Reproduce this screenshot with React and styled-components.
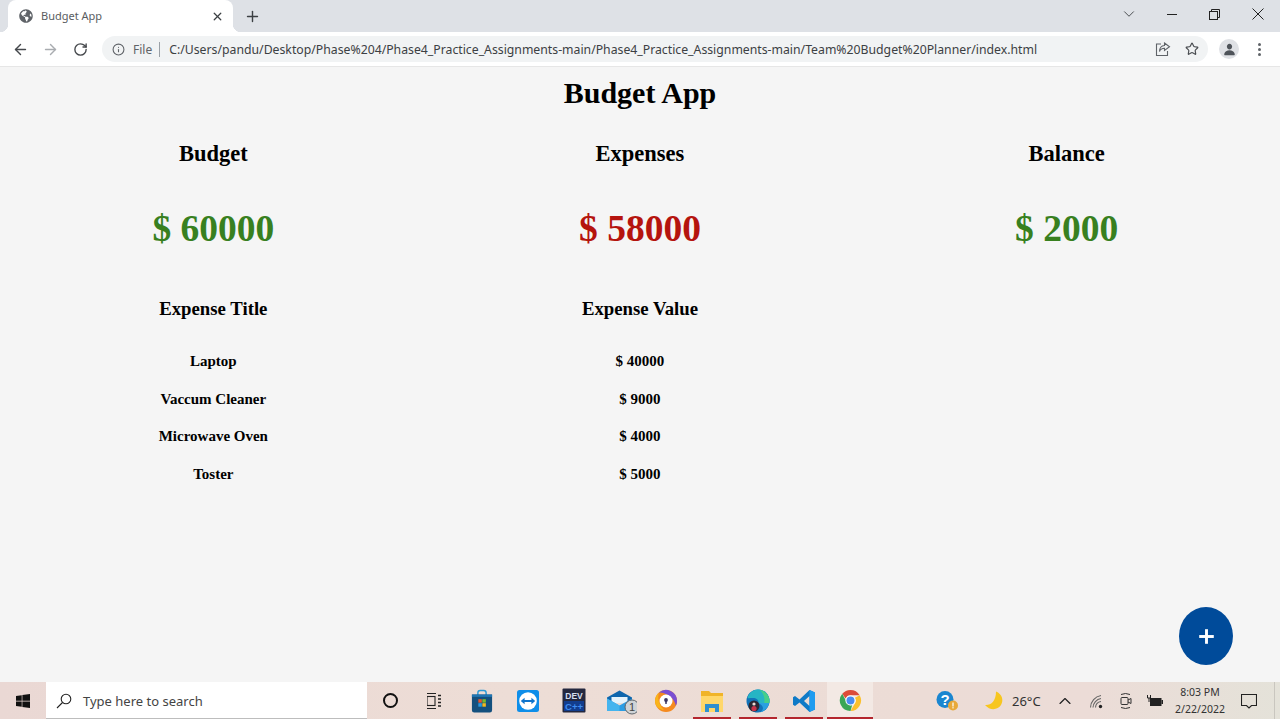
import React from 'react'
import styled, { createGlobalStyle } from 'styled-components'
import { X, Plus, ArrowLeft, ArrowRight, RotateCw, Info, Star, ChevronDown, ChevronUp } from 'lucide-react'
import { FaGlobeAmericas, FaWindows } from 'react-icons/fa'
import { IoPerson } from 'react-icons/io5'

const GlobalStyle = createGlobalStyle`
  html, body { margin: 0; padding: 0; height: 100%; }
  body { font-family: "Liberation Serif", serif; background: #f5f5f5; overflow: hidden; }
  #root { height: 100%; }
`

const budgetCards = [
  { title: 'Budget', value: '$ 60000', color: '#38801f' },
  { title: 'Expenses', value: '$ 58000', color: '#b5140e' },
  { title: 'Balance', value: '$ 2000', color: '#38801f' },
]

const expenses = [
  { title: 'Laptop', value: '$ 40000' },
  { title: 'Vaccum Cleaner', value: '$ 9000' },
  { title: 'Microwave Oven', value: '$ 4000' },
  { title: 'Toster', value: '$ 5000' },
]

const StoreIcon = () => (
  <svg width="22" height="24" viewBox="0 0 24 26">
    <path d="M7.500 7V4a2.500 2.500 0 0 1 2.500-2.500h4A2.500 2.500 0 0 1 16.500 4v3" fill="none" stroke="#2c9bd6" strokeWidth="1.600" />
    <path d="M1 6h22v17a2.500 2.500 0 0 1-2.500 2.500h-17A2.500 2.500 0 0 1 1 23z" fill="#14507e" />
    <path d="M1 6h22v2.500H1z" fill="#1f76b4" />
    <rect x="8" y="11" width="3.800" height="3.800" fill="#e8552c" />
    <rect x="12.400" y="11" width="3.800" height="3.800" fill="#7ab92c" />
    <rect x="8" y="15.400" width="3.800" height="3.800" fill="#2a9ae0" />
    <rect x="12.400" y="15.400" width="3.800" height="3.800" fill="#f6b81d" />
  </svg>
)

const TeamViewerIcon = () => (
  <svg width="24" height="24" viewBox="0 0 24 24">
    <rect x="1" y="1" width="22" height="22" rx="2.500" fill="#0e8ee9" />
    <circle cx="12" cy="12" r="8.800" fill="#fff" />
    <path d="M4.800 12l3.800-3.200v2.100h6.800V8.800l3.800 3.200-3.800 3.200v-2.100H8.600v2.100z" fill="#0e74cc" />
  </svg>
)

const DevIcon = () => (
  <svg width="24" height="25" viewBox="0 0 24 25">
    <rect x="0.500" y="0.500" width="23" height="24" rx="1" fill="#24283f" />
    <rect x="2" y="13" width="20" height="10" fill="#123d8e" />
    <text x="12" y="11" textAnchor="middle" fontSize="8.500" fontWeight="700" fontFamily="Liberation Sans, sans-serif" fill="#d5deee">DEV</text>
    <text x="12" y="22" textAnchor="middle" fontSize="9.500" fontWeight="700" fontFamily="Liberation Sans, sans-serif" fill="#3f8cf0">C++</text>
  </svg>
)

const MailIcon = () => (
  <svg width="34" height="28" viewBox="-3 0 34 28">
    <path d="M1 10.500L13.500 3.500 26 10.500v4H1z" fill="#0f66ad" />
    <path d="M5.500 10h16v6h-16z" fill="#e6f3fb" />
    <path d="M1 11.500l12.500 7 12.500-7V23a1 1 0 0 1-1 1H2a1 1 0 0 1-1-1z" fill="#2b9de4" />
    <path d="M1 11.500l12.500 7V24H2a1 1 0 0 1-1-1z" fill="#45b4ee" />
    <circle cx="26" cy="20" r="7" fill="#cfd3d6" stroke="#5f666c" strokeWidth="1" />
    <text x="26" y="24" textAnchor="middle" fontSize="11" fontFamily="Liberation Sans, sans-serif" fill="#444">1</text>
  </svg>
)

const BrowserBadge = () => (
  <svg width="24" height="24" viewBox="0 0 24 24">
    <circle cx="12" cy="12" r="11" fill="#f58a1f" />
    <path d="M5 3.500A11 11 0 0 1 23 12c0 2-.5 3.500-1.200 5C21 10 14 3.500 5 3.500z" fill="#7a4fd3" />
    <path d="M1 12c0-3 1.200-6 4-8.500C3.500 8 4 15 10 21 5 20.500 1 17 1 12z" fill="#f9b41b" />
    <circle cx="12" cy="12" r="6.500" fill="#fff" />
    <circle cx="12" cy="11" r="1.900" fill="#3b3560" />
    <rect x="11.200" y="11.500" width="1.600" height="3.400" fill="#3b3560" />
  </svg>
)

const FolderIcon = () => (
  <svg width="22" height="24" viewBox="0 0 22 24">
    <path d="M0 2h8l2 2h12v5H0z" fill="#f0b429" />
    <rect y="7" width="22" height="16" fill="#ffd76a" />
    <path d="M4 23v-8h14v8h-4v-4h-6v4z" fill="#2f8fd0" />
  </svg>
)

const EdgeIcon = () => (
  <svg width="24" height="24" viewBox="0 0 24 24">
    <circle cx="12" cy="12" r="11.500" fill="#1273b8" />
    <path d="M1.500 9C3 3.500 7.500.5 12 .5c6 0 11.500 4.500 11.500 11.500 0 1-.1 1.500-.3 2H12.500c.3-3-2-5-5.500-5-2.500 0-4.500.5-5.500 0z" fill="#26b5c4" />
    <path d="M14 1c5 1 9.500 5.500 9.500 11 0 1-.1 1.500-.3 2h-5c1-5-1-10-4.200-13z" fill="#46cf8a" />
    <path d="M12.500 14h10.700c-.8 4-4 8-8.700 9.200 2.800-2 3.200-5 1-7-1-1-2.200-1.300-3-2.200z" fill="#2aa0e0" />
    <circle cx="8" cy="17" r="5.500" fill="#2b2733" />
    <circle cx="8" cy="19.500" r="2.600" fill="#c8344a" />
    <circle cx="8" cy="15" r="1.600" fill="#e9d9d4" />
  </svg>
)

const VsCodeIcon = () => (
  <svg width="24" height="24" viewBox="0 0 24 24">
    <path d="M17.500 1L23 3.600v16.800L17.500 23 7.500 13.600 3 17l-2-1.200V8.200L3 7l4.500 3.400zM17.500 7l-5.500 5 5.500 5z" fill="#0f7ac7" fillRule="evenodd" />
    <path d="M17.500 1L23 3.600v16.800L17.500 23z" fill="#1f9cf0" />
  </svg>
)

const ChromeIcon = () => (
  <svg width="23" height="23" viewBox="0 0 24 24">
    <path d="M12 1a11 11 0 0 1 9.530 5.500H12a5.500 5.500 0 0 0-5.100 3.500L3.400 5A11 11 0 0 1 12 1z" fill="#dd4b39" />
    <path d="M21.530 6.500A11 11 0 0 1 12 23l4.700-8.200A5.500 5.500 0 0 0 16.700 9z" fill="#fbc02d" />
    <path d="M12 23A11 11 0 0 1 3.400 5l4.700 8.700a5.500 5.500 0 0 0 5.600 3.300z" fill="#3aa655" />
    <circle cx="12" cy="12" r="5.300" fill="#fff" />
    <circle cx="12" cy="12" r="4.200" fill="#4a8cf0" />
  </svg>
)

const HelpIcon = () => (
  <svg width="24" height="24" viewBox="0 0 24 24">
    <circle cx="10" cy="10.500" r="8.500" fill="#1a86d0" />
    <text x="10" y="16" textAnchor="middle" fontSize="15" fontWeight="700" fontFamily="Liberation Sans, sans-serif" fill="#fff">?</text>
    <circle cx="18" cy="16.500" r="5" fill="#e8a93a" />
    <rect x="17.400" y="13.500" width="1.200" height="4" fill="#fff" />
    <rect x="17.400" y="18.200" width="1.200" height="1.200" fill="#fff" />
  </svg>
)

const MoonIcon = () => (
  <svg width="20" height="20" viewBox="0 0 20 20">
    <path d="M12 .5C18 3 20 9 17 14 14 19 6 20 1 14 7 14.500 12 10 12 .5z" fill="#f7c61f" />
  </svg>
)

const WifiIcon = () => (
  <svg width="16" height="16" viewBox="0 0 16 16" fill="none" stroke="#666" strokeWidth="1.100">
    <path d="M1.500 14.500A12.500 12.500 0 0 1 12 2.500" />
    <path d="M4 14.500a9.500 9.500 0 0 1 8-9" />
    <path d="M6.500 14.500a6.500 6.500 0 0 1 5.500-6" />
    <circle cx="11.500" cy="13.500" r="1.700" fill="#222" stroke="none" />
  </svg>
)

const MeetIcon = () => (
  <svg width="14" height="18" viewBox="0 0 14 18" fill="none" stroke="#333" strokeWidth="1">
    <path d="M2 2.500q4.500-2 9 0M2 15.500q4.500 2 9 0" />
    <rect x="2" y="5.500" width="7" height="7" rx="1" />
    <path d="M9 8l3-1.500v5L9 10" />
  </svg>
)

const BatteryIcon = () => (
  <svg width="16" height="12" viewBox="0 0 16 12">
    <rect x="3" y="3" width="11.500" height="8" fill="#222" />
    <rect x="14.500" y="5" width="1.500" height="4" fill="#222" />
    <path d="M.5 0v3h3V0M2 3v4" stroke="#222" fill="none" />
  </svg>
)

const App = () => {
  return (
    <Screen>
      <GlobalStyle />
      <TabStrip>
        <Tab>
          <TabFavicon><FaGlobeAmericas size={14} /></TabFavicon>
          <TabTitle>Budget App</TabTitle>
          <TabClose><X size={13} strokeWidth={2.4} /></TabClose>
        </Tab>
        <NewTab><Plus size={17} strokeWidth={2} /></NewTab>
        <WindowControls>
          <WindowButton><ChevronDown size={18} strokeWidth={1.200} /></WindowButton>
          <WindowButton>
            <svg width="10" height="10" viewBox="0 0 10 10"><path d="M0 5.500h10" stroke="#222" /></svg>
          </WindowButton>
          <WindowButton>
            <svg width="11" height="11" viewBox="0 0 11 11" fill="none" stroke="#222"><rect x="0.500" y="2.500" width="8" height="8" /><path d="M2.500 2.500v-2h8v8h-2" /></svg>
          </WindowButton>
          <WindowButton>
            <svg width="12" height="12" viewBox="0 0 12 12"><path d="M.5.500l11 11M11.500.500l-11 11" stroke="#222" /></svg>
          </WindowButton>
        </WindowControls>
      </TabStrip>

      <Toolbar>
        <NavButton><ArrowLeft size={17} strokeWidth={2} /></NavButton>
        <NavButton $disabled><ArrowRight size={17} strokeWidth={2} /></NavButton>
        <NavButton><RotateCw size={15} strokeWidth={2.200} /></NavButton>
        <Omnibox>
          <Info size={13} color="#5f6368" strokeWidth={2} />
          <FileLabel>File</FileLabel>
          <OmniDivider />
          <UrlText>C:/Users/pandu/Desktop/Phase%204/Phase4_Practice_Assignments-main/Phase4_Practice_Assignments-main/Team%20Budget%20Planner/index.html</UrlText>
          <OmniActions>
            <svg width="16" height="16" viewBox="0 0 16 16" fill="none" stroke="#5f6368" strokeWidth="1.100">
              <path d="M6 3H1.500v11.500h11V10" />
              <path d="M9.500 2l5 3.800-5 3.700V7.300C7 7.300 5.300 8.400 4.500 10.500c0-3.400 1.800-5.700 5-6z" />
            </svg>
            <Star size={14} color="#4a4d51" strokeWidth={2} />
          </OmniActions>
        </Omnibox>
        <Avatar><IoPerson size={13} color="#4e5359" /></Avatar>
        <MenuDots><i /><i /><i /></MenuDots>
      </Toolbar>

      <Page>
        <PageTitle>Budget App</PageTitle>
        <ThreeColumns>
          {budgetCards.map((card) => (
            <SummaryCard key={card.title}>
              <CardTitle>{card.title}</CardTitle>
              <CardValue $color={card.color}>{card.value}</CardValue>
            </SummaryCard>
          ))}
        </ThreeColumns>
        <ExpenseHead>
          <ExpenseHeading>Expense Title</ExpenseHeading>
          <ExpenseHeading>Expense Value</ExpenseHeading>
        </ExpenseHead>
        {expenses.map((item) => (
          <ExpenseRow key={item.title}>
            <ExpenseCell>{item.title}</ExpenseCell>
            <ExpenseCell>{item.value}</ExpenseCell>
          </ExpenseRow>
        ))}
        <AddButton><Plus size={25} strokeWidth={2.800} strokeLinecap="butt" /></AddButton>
      </Page>

      <Taskbar>
        <StartButton><FaWindows size={16} color="#111" /></StartButton>
        <SearchBox>
          <svg width="16" height="16" viewBox="0 0 16 16" fill="none" stroke="#222" strokeWidth="1.100">
            <circle cx="10" cy="6" r="4.800" />
            <path d="M6.500 9.500L1 15" />
          </svg>
          <SearchText>Type here to search</SearchText>
        </SearchBox>
        <AppSlot><CortanaRing /></AppSlot>
        <AppSlot>
          <svg width="18" height="18" viewBox="2 0 18 18" fill="none" stroke="#222" strokeWidth="1.100">
            <path d="M1 1.500h10M1 16.500h10" />
            <rect x="2" y="4.500" width="8" height="9" />
            <path d="M13 3.500h3M13 7h3M13 10.500h3M13 14h3" strokeWidth="1.600" />
          </svg>
        </AppSlot>
        <AppSlot><StoreIcon /></AppSlot>
        <AppSlot><TeamViewerIcon /></AppSlot>
        <AppSlot><DevIcon /></AppSlot>
        <AppSlot><MailIcon /></AppSlot>
        <AppSlot><BrowserBadge /></AppSlot>
        <AppSlot $running><FolderIcon /></AppSlot>
        <AppSlot $running><EdgeIcon /></AppSlot>
        <AppSlot $running><VsCodeIcon /></AppSlot>
        <AppSlot $running $active><ChromeIcon /></AppSlot>

        <Tray>
          <TraySlot $w={46}><HelpIcon /></TraySlot>
          <WeatherSlot><MoonIcon /><TrayText>26°C</TrayText></WeatherSlot>
          <TraySlot $w={34}><ChevronUp size={20} strokeWidth={1.400} color="#222" /></TraySlot>
          <TraySlot $w={30}><WifiIcon /></TraySlot>
          <TraySlot $w={28}><MeetIcon /></TraySlot>
          <TraySlot $w={29}><BatteryIcon /></TraySlot>
          <Clock><span>8:03 PM</span><span>2/22/2022</span></Clock>
          <TraySlot $w={36}>
            <svg width="16" height="16" viewBox="0 0 16 16" fill="none" stroke="#222" strokeWidth="1.100">
              <path d="M.5 1.500h15v11h-5L8 15l-2.500-2.500h-5z" />
            </svg>
          </TraySlot>
          <ShowDesktop />
        </Tray>
      </Taskbar>
    </Screen>
  )
}

export default App

const Screen = styled.div`
  display: flex;
  flex-direction: column;
  height: 100vh;
`

const TabStrip = styled.div`
  display: flex;
  align-items: flex-end;
  height: 32px;
  padding-left: 8px;
  background: #dee1e6;
  flex-shrink: 0;
`

const Tab = styled.div`
  position: relative;
  display: flex;
  align-items: center;
  width: 225px;
  height: 32px;
  box-sizing: border-box;
  padding: 0 9px 0 11px;
  background: #fff;
  border-radius: 8px 8px 0 0;
  &::before, &::after {
    content: '';
    position: absolute;
    bottom: 0;
    width: 8px;
    height: 8px;
    background: radial-gradient(circle at 0 0, #dee1e6 8px, #fff 8.500px);
  }
  &::before { left: -8px; }
  &::after { right: -8px; background: radial-gradient(circle at 100% 0, #dee1e6 8px, #fff 8.500px); }
`

const TabFavicon = styled.span`
  display: flex;
  color: #5f6368;
`

const TabTitle = styled.span`
  margin: 0 0 1px 8px;
  flex: 1;
  font: 11px "Noto Sans", sans-serif;
  color: #5a5d61;
`

const TabClose = styled.span`
  display: flex;
  color: #3c4043;
`

const NewTab = styled.span`
  display: flex;
  margin: 0 0 7px 11px;
  color: #3c4043;
`

const WindowControls = styled.div`
  display: flex;
  align-items: center;
  margin-left: auto;
  height: 28px;
  padding-right: 1px;
  align-self: flex-start;
`

const WindowButton = styled.span`
  display: flex;
  align-items: center;
  justify-content: center;
  width: 43px;
  color: #3c4043;
`

const Toolbar = styled.div`
  display: flex;
  align-items: center;
  height: 34px;
  box-sizing: content-box;
  padding-left: 5px;
  background: #fff;
  border-bottom: 1px solid #e6e6e6;
  flex-shrink: 0;
`

const NavButton = styled.span`
  display: flex;
  justify-content: center;
  width: 30px;
  color: ${(p) => (p.$disabled ? '#a9acb0' : '#45484c')};
`

const Omnibox = styled.div`
  display: flex;
  align-items: center;
  width: 1106px;
  height: 26px;
  box-sizing: border-box;
  margin-left: 7px;
  padding: 0 9px 0 10px;
  background: #f1f3f4;
  border-radius: 13px;
`

const FileLabel = styled.span`
  margin-left: 8px;
  font: 12px "Noto Sans", sans-serif;
  color: #5f6368;
`

const OmniDivider = styled.span`
  width: 1px;
  height: 15px;
  margin: 0 9px 0 7px;
  background: #9aa0a6;
`

const UrlText = styled.span`
  font: 12.260px "Noto Sans", sans-serif;
  color: #3c4043;
  white-space: nowrap;
`

const OmniActions = styled.span`
  display: flex;
  align-items: center;
  gap: 14px;
  margin-left: auto;
`

const Avatar = styled.span`
  display: flex;
  align-items: center;
  justify-content: center;
  width: 20px;
  height: 20px;
  margin-left: 11px;
  border-radius: 50%;
  background: #dfe1e5;
`

const MenuDots = styled.span`
  display: flex;
  flex-direction: column;
  gap: 2px;
  margin-left: 19px;
  i {
    display: block;
    width: 3px;
    height: 3px;
    border-radius: 50%;
    background: #5f6368;
  }
`

const Page = styled.main`
  position: relative;
  flex: 1;
  min-height: 0;
  background: #f5f5f5;
`

const PageTitle = styled.h1`
  margin: 9px 0 0;
  text-align: center;
  font-size: 30px;
  line-height: 34px;
  font-weight: 700;
  color: #000;
`

const ThreeColumns = styled.section`
  display: grid;
  grid-template-columns: repeat(3, 1fr);
`

const SummaryCard = styled.div`
  text-align: center;
`

const CardTitle = styled.h2`
  margin: 31px 0 0;
  font-size: 22.500px;
  line-height: 26px;
  font-weight: 700;
  color: #000;
`

const CardValue = styled.div`
  margin-top: 40px;
  font-size: 37.500px;
  line-height: 44px;
  font-weight: 700;
  color: ${(p) => p.$color};
`

const ExpenseHead = styled.div`
  display: grid;
  grid-template-columns: repeat(3, 1fr);
  margin-top: 47px;
  margin-bottom: 23px;
`

const ExpenseHeading = styled.h3`
  margin: 0;
  text-align: center;
  font-size: 18.750px;
  line-height: 22px;
  font-weight: 700;
  color: #000;
`

const ExpenseRow = styled.div`
  display: grid;
  grid-template-columns: repeat(3, 1fr);
  height: 37.500px;
  align-items: center;
`

const ExpenseCell = styled.div`
  text-align: center;
  font-size: 15px;
  font-weight: 700;
  color: #000;
`

const AddButton = styled.button`
  position: absolute;
  right: 47px;
  bottom: 17px;
  display: flex;
  align-items: center;
  justify-content: center;
  width: 54px;
  height: 58px;
  padding: 0;
  border: 0;
  border-radius: 50%;
  background: #004b9a;
  color: #fff;
`

const Taskbar = styled.footer`
  display: flex;
  align-items: stretch;
  height: 37px;
  flex-shrink: 0;
  background: linear-gradient(90deg, #ead8d4 0%, #edddd6 40%, #ecdcd6 72%, #ecdcd7 85%, #e4e2d9 100%);
`

const StartButton = styled.div`
  display: flex;
  align-items: center;
  justify-content: center;
  width: 46px;
`

const SearchBox = styled.div`
  display: flex;
  align-items: center;
  width: 321px;
  box-sizing: border-box;
  padding: 1px 0 0 10px;
  background: #fff;
  border-bottom: 1px solid #bdbdbd;
`

const SearchText = styled.span`
  margin-left: 11px;
  font: 13px "Noto Sans", sans-serif;
  color: #444;
`

const AppSlot = styled.div`
  position: relative;
  display: flex;
  align-items: center;
  justify-content: center;
  width: 46px;
  background: ${(p) => (p.$active ? '#f3e9e4' : 'transparent')};
  &::after {
    content: '';
    display: ${(p) => (p.$running ? 'block' : 'none')};
    position: absolute;
    bottom: 0;
    left: ${(p) => (p.$active ? '0' : '4px')};
    right: ${(p) => (p.$active ? '0' : '4px')};
    height: 2px;
    background: #b4262e;
  }
`

const CortanaRing = styled.span`
  display: block;
  width: 11px;
  height: 11px;
  border: 2px solid #111;
  border-radius: 50%;
`

const Tray = styled.div`
  display: flex;
  align-items: stretch;
  margin-left: auto;
`

const TraySlot = styled.div`
  display: flex;
  align-items: center;
  justify-content: center;
  width: ${(p) => p.$w}px;
`

const WeatherSlot = styled.div`
  display: flex;
  align-items: center;
  gap: 8px;
  width: 78px;
  box-sizing: border-box;
  padding-left: 14px;
`

const TrayText = styled.span`
  font: 13px "Noto Sans", sans-serif;
  color: #333;
`

const Clock = styled.div`
  display: flex;
  flex-direction: column;
  align-items: center;
  justify-content: center;
  width: 62px;
  font: 10.500px/17px "Noto Sans", sans-serif;
  color: #333;
`

const ShowDesktop = styled.div`
  position: relative;
  width: 13px;
  &::after {
    content: '';
    position: absolute;
    top: 0;
    bottom: 0;
    right: 5px;
    width: 1px;
    background: #c9c6bf;
  }
`
